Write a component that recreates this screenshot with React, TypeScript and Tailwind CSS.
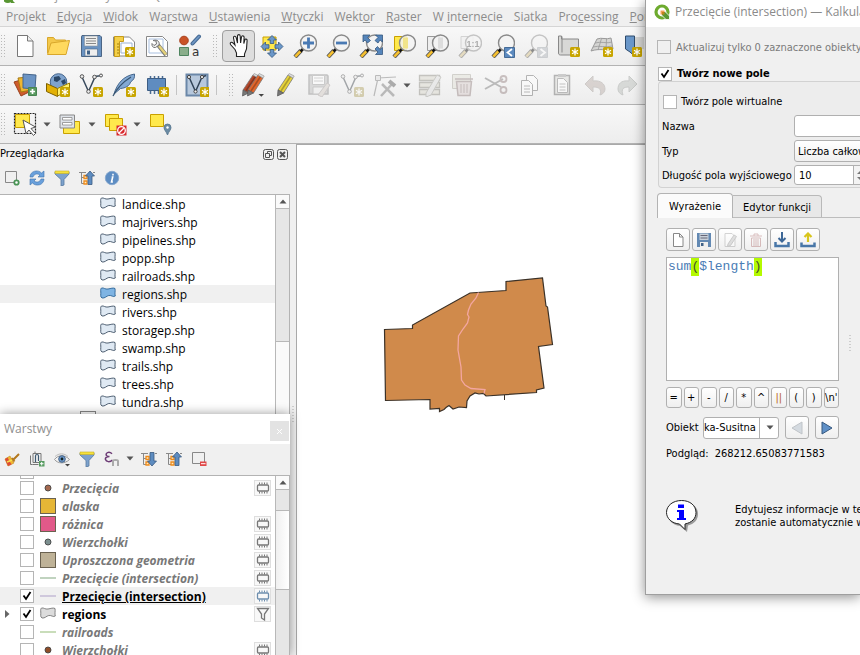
import type { ReactNode } from 'react';

const ui = "font-['Open_Sans','Noto_Sans',sans-serif]";
const dlgFont = "font-['DejaVu_Sans_Condensed','DejaVu_Sans',sans-serif]";

/* ---------- shared drawing parts ---------- */

function Svg({ size = 24, children, dim = false }: { size?: number; children: ReactNode; dim?: boolean }) {
  return (
    <svg width={size} height={size} viewBox={`0 0 ${size} ${size}`} fill="none" className={dim ? 'shrink-0 opacity-45 grayscale-[60%]' : 'shrink-0'} aria-hidden="true">
      {children}
    </svg>
  );
}

function Badge({ x = 15, y = 14 }: { x?: number; y?: number }) {
  return (
    <g transform={`translate(${x} ${y})`}>
      <rect x="0" y="0" width="10" height="10" rx="1.5" fill="#c8a500" />
      <path d="M5 1.5v7M2 3.2l6 3.6M8 3.2L2 6.8" stroke="#fff" strokeWidth="1.3" />
    </g>
  );
}

function Lens({ children }: { children?: ReactNode }) {
  return (
    <g>
      <path d="M2 23l6-6.500" stroke="#555" strokeWidth="4.200" />
      <path d="M2.300 22.700l5.400-5.800" stroke="#f7c12f" strokeWidth="2.500" />
      <path d="M7.500 17.500l3-3" stroke="#111" strokeWidth="2.800" />
      <circle cx="15.500" cy="9" r="8" fill="#f3f3f3" fillOpacity=".85" stroke="#8a8a8a" strokeWidth="1.400" />
      {children}
    </g>
  );
}

function Pencil({ x = 0, color = '#e8d33a' }: { x?: number; color?: string }) {
  return (
    <g transform={`translate(${x} 0)`}>
      <path d="M4 17L14 2l5 3L9.500 20z" fill={color} stroke="#777" strokeWidth=".8" />
      <path d="M7 18L16.500 3.500" stroke="#000" strokeOpacity=".25" strokeWidth="1.600" />
      <path d="M14 2l1.200-1.500 5 2.500-1.200 2z" fill="#ddd" stroke="#999" strokeWidth=".7" />
      <path d="M4 17l5.500 3L3.500 23z" fill="#777" stroke="#555" strokeWidth=".7" />
    </g>
  );
}

const page = 'M4.500 1.500h10l5.500 5.500v15.500h-15.500z';

/* ---------- toolbar icons ---------- */

const NewDoc = () => (
  <Svg><path d={page} fill="#fff" stroke="#777" /><path d="M14.500 1.500V7H20" stroke="#777" fill="#eee" /></Svg>
);
const Folder = () => (
  <Svg><path d="M1.500 19V3.500h6l2 2.500h10v4" fill="#f3c84b" stroke="#d8a72c" /><path d="M1.500 20.500L5 9l18.500-2.500L20 20.500z" fill="#ffd95e" stroke="#d8a72c" /></Svg>
);
const Save = () => (
  <Svg>
    <path d="M3 1.500h18l1.500 1.500v19.500h-20V3z" fill="#6a93c2" stroke="#4b6585" />
    <path d="M5.500 2h13v10h-13z" fill="#f0f0ee" stroke="#8b949e" strokeWidth=".6" />
    <path d="M7 4.500h10M7 7h10M7 9.500h10" stroke="#888" />
    <path d="M6 15h12.500v7H6z" fill="#eee" stroke="#4b6585" strokeWidth=".6" /><path d="M8 16.500h3v4H8z" fill="#3f6187" />
  </Svg>
);
const Layout = () => (
  <Svg>
    <path d="M1.500 3h16l5 5v14h-21z" fill="#fff" stroke="#888" />
    <path d="M2.500 2.500h9v5h-4v15h-5z" fill="#f4d048" stroke="#c69b18" />
    <path d="M5 10h2M5 13h2M5 16h2M5 19h2" stroke="#8a6a00" strokeWidth=".8" /><path d="M9 9h11v10H9z" stroke="#9bb2d2" />
    <Badge x={13} y={13} />
  </Svg>
);
const LayoutManager = () => (
  <Svg>
    <path d="M1.500 2.500h16l5 5v15h-21z" fill="#fff" stroke="#888" /><path d="M4 5h14v14H4z" stroke="#a9c0e0" />
    <path d="M13 11l8 10" stroke="#777" strokeWidth="4" /><path d="M14 12l7 8.500" stroke="#e5d27a" strokeWidth="2.400" />
    <path d="M8 6.500l3 .5.500 3-2.500 1.500L7 9.500c-.5 2.500 1 4.500 3.500 4l3.500-2.500c1-3-1.500-6-6-4.500z" fill="#eee" stroke="#777" />
  </Svg>
);
const StyleManager = () => (
  <Svg>
    <circle cx="6" cy="6.500" r="4.300" fill="#c95327" stroke="#a8401b" /><path d="M14.500 9.500L21 2.500" stroke="#476b94" strokeWidth="4" strokeLinecap="round" /><path d="M14.500 9.500L21 2.500" stroke="#6f97c4" strokeWidth="1.800" strokeLinecap="round" />
    <path d="M1.500 13.500h9v8h-9z" fill="#8aae8b" stroke="#4f8560" />
    <text x="14" y="22" fontSize="12" fill="#333" fontFamily="DejaVu Sans, sans-serif">a</text>
  </Svg>
);
const Hand = () => (
  <Svg>
    <path d="M8 15.500L3.500 10.500C2.500 8.500 4.500 7.500 6 9l2 2.200L6.500 4c-.3-1.900 2-2.400 2.600-.6L10.500 9V2c0-1.900 2.600-1.900 2.700 0l.4 7L14.500 3c.3-1.800 2.700-1.400 2.600.3L16.800 9.500l1-3.500c.5-1.600 2.500-1 2.300.6L19.500 15l-2 5v2.500H9.500V19z" fill="#fff" stroke="#222" strokeWidth="1.100" />
  </Svg>
);
const PanSelection = () => (
  <Svg>
    <path d="M3 3h13v13H3z" fill="#ffe94c" stroke="#c9a000" />
    {[0, 90, 180, 270].map((a) => (
      <path key={a} transform={`rotate(${a} 12 12.500)`} d="M12 1.500l4.500 4.500h-2.700v3.500h-3.600V6H7.500z" fill="#6a97c9" stroke="#36587f" strokeWidth=".8" />
    ))}
  </Svg>
);
const ZoomIn = () => <Svg><Lens><path d="M15.500 3.500v11M10 9h11" stroke="#4a7ab4" strokeWidth="2.800" /></Lens></Svg>;
const ZoomOut = () => <Svg><Lens><path d="M10 9h11" stroke="#4a7ab4" strokeWidth="2.800" /></Lens></Svg>;
const ZoomFull = () => (
  <Svg>
    <Lens />
    <path d="M4 1h7L8.500 3.500l3 3-3 2.500-2.500-3L4 8zM23.500 1h-7L19 3.500l-3 3L19 9l2-3 2.500 2zM23.500 20.500h-7L19 18l-3-3 2.500-2.500L21 15.500l2.500-2z" fill="#5585bb" stroke="#36587f" strokeWidth=".8" />
  </Svg>
);
const ZoomSel = () => (
  <Svg><path d="M2.500 2.500h12v14h-12z" fill="#ffe94c" stroke="#c9a000" /><Lens><path d="M11 3.500h5v11h-5z" fill="#f1e48a" /></Lens></Svg>
);
const ZoomLayer = () => (
  <Svg><path d="M2.500 2.500h12v14h-12z" fill="#eee" stroke="#999" /><Lens><path d="M15.500 3.500v11" stroke="#ddd" strokeWidth="5" /></Lens></Svg>
);
const ZoomNative = () => (
  <Svg dim>
    <path d="M3 2.500h12v12H3z" fill="#eee" stroke="#aaa" />
    <Lens /><text x="8.500" y="12.500" fontSize="9" fontWeight="bold" fill="#555" fontFamily="Liberation Sans, sans-serif">1:1</text>
  </Svg>
);
const ZoomLast = () => (
  <Svg><Lens /><path d="M13.500 13.500h10v10h-10z" fill="#5c8abf" stroke="#456b96" /><path d="M21 15l-4.500 3.500L21 22" stroke="#fff" strokeWidth="1.800" /></Svg>
);
const ZoomNext = () => (
  <Svg dim><Lens /><path d="M13.500 13.500h10v10h-10z" fill="#a8b5c3" stroke="#9aa6b4" /><path d="M16.500 15l4.500 3.500-4.500 3.500" stroke="#fff" strokeWidth="1.800" /></Svg>
);
const NewMap = () => (
  <Svg><path d="M1.500 2h3v3h17v16h-18c-1 0-2-.5-2-2z" fill="#d8d8d6" stroke="#888" /><path d="M5 2.500v16" stroke="#888" /><Badge x={13} y={13} /></Svg>
);
const New3D = () => (
  <Svg>
    <path d="M7 5c5-2 9 1 14-1l2 11c-8 2-13-1-22 2z" fill="#d5d5d3" stroke="#999" />
    <path d="M5 9c6-2 12 1 17-1M3 13c6-2 13 1 19-1M11.500 4.500L8 16M16.500 5l-.5 11" stroke="#999" strokeWidth=".8" /><Badge x={13} y={13} />
  </Svg>
);
const Bookmark = () => (
  <Svg><path d="M2.500 2h9v20l-4.500-4-4.500-3z" fill="#6a97c9" stroke="#2f4c6d" /><path d="M12 3h9v12h-9z" fill="#d8d8d6" /><Badge x={9} y={13} /></Svg>
);
const DataSource = () => (
  <Svg>
    <path d="M1 9l10-3 5 13-8 4z" fill="#cf5c2c" stroke="#99401c" /><path d="M5 5l11-1 2 13-10 2z" fill="#efb62f" stroke="#a77a12" />
    <path d="M10 1l13 1-1 14-12-1z" fill="#6c94c4" stroke="#44648a" />
    <path d="M15.500 14.500h8v8h-8z" fill="#5a9a61" stroke="#478450" /><path d="M19.500 16v5M17 18.500h5" stroke="#fff" strokeWidth="1.700" />
  </Svg>
);
const Geopackage = () => (
  <Svg>
    <circle cx="12.500" cy="9" r="8.300" fill="#7fa3cd" stroke="#45658c" /><path d="M8 4l5-1 2 3-4 3-3-1zM15 8l4-2 1 4-3 2z" fill="#2b4767" />
    <path d="M.5 10.500l11 5v8l-11-5z" fill="#e3b004" stroke="#7d6000" /><path d="M11.500 15.500l12-5.500v7l-12 6z" fill="#fff06a" stroke="#9c7b00" /><Badge x={14} y={14} />
  </Svg>
);
const Shape = () => (
  <>
    <path d="M3 4l6.500 14.500L16 4c2-2 5 0 7-2" stroke="#37495c" strokeWidth="1.500" />
    <circle cx="3" cy="3.500" r="1.800" fill="#eee" stroke="#555" /><circle cx="15.500" cy="4" r="1.800" fill="#eee" stroke="#555" /><circle cx="9.500" cy="18.500" r="1.800" fill="#eee" stroke="#555" /><circle cx="22" cy="2.500" r="1.500" fill="#eee" stroke="#555" />
  </>
);
const NewShape = () => <Svg><Shape /><Badge x={14} y={14} /></Svg>;
const Feather = () => (
  <Svg><path d="M2 21C5 11 11 3 22.500 1c.5 4-1 6-4 8-1 4-5 6-10 6.500z" fill="#83a9d3" stroke="#46678d" /><path d="M1 23C5 15 11 9 19 4" stroke="#35536f" strokeWidth="1.200" /><Badge x={14} y={14} /></Svg>
);
const Scratch = () => (
  <Svg>
    <path d="M5.500 3v18M9.500 3v18M13.500 3v18M17.500 3v18" stroke="#4a6b92" strokeWidth="1.500" /><path d="M2.500 5.500h18v12h-18z" fill="#5f8cc0" stroke="#3c5d84" /><Badge x={14} y={14} />
  </Svg>
);
const Virtual = () => (
  <Svg><path d="M1.500 1.500h21v21h-21z" fill="#b7c8dc" stroke="#6b87a8" strokeWidth="2" /><path d="M4 4l6.500 14.500L17 4l4-1.500" stroke="#2f4257" strokeWidth="1.500" /><circle cx="4" cy="4" r="1.600" fill="#eee" stroke="#444" /><circle cx="17" cy="4" r="1.600" fill="#eee" stroke="#444" /><circle cx="10.500" cy="18.500" r="1.600" fill="#eee" stroke="#444" /><Badge x={15} y={14} /></Svg>
);
const Pencils = () => <Svg><Pencil x={-2} color="#b5472a" /><Pencil x={3} color="#e2662c" /><path d="M17.500 21h5.500l-2.700 2.700z" fill="#444" /></Svg>;
const Edit = () => <Svg><Pencil x={0} color="#e8d33a" /></Svg>;
const SaveEdits = () => (
  <Svg dim><path d="M2 2h18l1 1v18H2z" fill="#bbb" stroke="#888" strokeWidth="1.500" /><path d="M5.500 2.500h12v9h-12z" fill="#fff" stroke="#999" /><path d="M7 5h9M7 8h9" stroke="#aaa" /><path d="M6 14h11v7H6z" fill="#eee" stroke="#999" /><path d="M11 22l9-12 3 2-8 12z" fill="#ddc9b9" stroke="#a99" /></Svg>
);
const AddFeature = () => <Svg dim><Shape /><Badge x={14} y={14} /></Svg>;
const Vertex = () => (
  <Svg dim><path d="M1 23L5 5l18-1" stroke="#777" strokeWidth="1.200" /><path d="M2.500 2.500h5v5h-5z" fill="#ddd" stroke="#777" /><path d="M9 11l12 12M20 10L8 23" stroke="#777" strokeWidth="2.500" /><path d="M16 8l6 5" stroke="#555" strokeWidth="4" /></Svg>
);
const Attributes = () => (
  <Svg dim><path d="M1.500 2.500h20v5h-20zM1.500 9.500h20v5h-20zM1.500 16.500h20v5h-20z" fill="#ddd6b8" stroke="#8d8872" strokeWidth="1.300" /><path d="M8 20L19 2l4 2-10 18-5 2z" fill="#ddd" stroke="#998" /></Svg>
);
const Delete = () => (
  <Svg dim><path d="M1.500 1.500h18v14h-18z" fill="#e3dfc8" stroke="#aaa58c" /><path d="M4 6h18M5.500 8.500h15l-1.500 14H7z" fill="#e4c6c4" stroke="#a47775" strokeWidth="1.500" /><path d="M10 11v9M13 11v9M16 11v9" stroke="#a47775" /></Svg>
);
const Cut = () => (
  <Svg dim><path d="M1 5l16 9M1 16L19 6" stroke="#777" strokeWidth="2" /><circle cx="19.500" cy="6" r="3" stroke="#a77" strokeWidth="1.800" /><circle cx="19.500" cy="17" r="3" stroke="#a77" strokeWidth="1.800" /></Svg>
);
const Copy = () => (
  <Svg dim><path d="M9.500 2.500h7l4 4v11h-11z" fill="#fff" stroke="#666" /><path d="M4.500 7.500h7l4 4v11h-11z" fill="#fff" stroke="#666" /><path d="M7 13h6M7 16h6M7 19h6" stroke="#777" /></Svg>
);
const Paste = () => (
  <Svg dim><path d="M4.500 2.500h15v19h-15z" fill="#d9d9cf" stroke="#666" strokeWidth="1.500" /><path d="M7.500 5.500h6l4 4v10h-10z" fill="#fff" stroke="#777" /><path d="M8 1h8v3H8z" fill="#999" /><path d="M9.500 11h6M9.500 14h6M9.500 17h6" stroke="#888" /></Svg>
);
const Undo = () => <Svg dim><path d="M2 11l8-8v5c8-1 12 3 12 8 0 3-2 5-5 6 2-6-1-8-7-8v5z" fill="#c9a99a" stroke="#a99a92" /></Svg>;
const Redo = () => <Svg dim><path d="M21 11l-8-8v5C5 7 2 11 2 16c0 3 2 5 5 6-2-6 0-8 6-8v5z" fill="#b3bdb3" stroke="#949c94" /></Svg>;
const Select = () => (
  <Svg>
    <path d="M1.500 1.500h21v20h-21z" stroke="#222" strokeWidth="1.200" strokeDasharray="2 1" /><path d="M2.500 2.500h14v13h-14z" fill="#ffe94c" stroke="#c9a000" />
    <path d="M10 8l3 13.500 3-3.500 4.500 5.500 2-2-4.500-5 4.500-1.500z" fill="#fff" stroke="#555" />
  </Svg>
);
const SelectValue = () => (
  <Svg><path d="M5.500 9.500h16v12h-16z" fill="#ffe94c" stroke="#c9a000" /><path d="M2 3h14.500v13H2z" fill="#dfe3e9" stroke="#888" /><path d="M4.500 5.500h9.500v2.500H4.500zM4.500 10.500h9.500V13H4.500z" fill="#fff" stroke="#8a8a8a" strokeWidth=".8" /></Svg>
);
const Deselect = () => (
  <Svg>
    <path d="M2.500 2.500h13v12h-13z" fill="#ffe94c" stroke="#c9a000" /><path d="M6.500 6.500h13v12h-13z" fill="#ffe94c" stroke="#c9a000" />
    <path d="M13.500 13.500h10v10h-10z" fill="#d9292e" /><circle cx="18.500" cy="18.500" r="3.800" stroke="#fff" strokeWidth="1.300" /><path d="M16 21l5-5" stroke="#fff" strokeWidth="1.300" />
  </Svg>
);
const SelectLoc = () => (
  <Svg><path d="M2.500 2.500h13v12h-13z" fill="#ffe94c" stroke="#c9a000" /><path d="M19.500 23c-1.500-4-3.500-5-3.500-7.500a3.500 3.500 0 0 1 7 0c0 2.500-2 3.500-3.500 7.500z" fill="#6b8ba4" stroke="#54748c" strokeWidth=".8" /><circle cx="19.500" cy="15.500" r="1.200" fill="#fff" /></Svg>
);

/* ---------- small panel icons ---------- */

const Tree = ({ down = false }: { down?: boolean }) => (
  <Svg size={16}>
    <path d="M0 2.500h7M2.500 2.500v11h4M2.500 7.500h3M14 2.500h2" stroke="#888" /><path d="M5 5.500h3v3H5zM5 11h3v3H5z" fill="#fbe9c6" stroke="#f08c1a" strokeWidth="1.300" />
    <path transform={down ? 'rotate(180 11 8)' : undefined} d="M11 1l4.500 5h-2.500v8.500H9V6H6.500z" fill="#5e8cc0" stroke="#3a5b82" strokeWidth=".8" />
  </Svg>
);
const Funnel = () => (
  <Svg size={16}><path d="M1 2h14v2L10 9.500V15l-3 1V9.500L1 4z" fill="#7da2cd" stroke="#55799f" strokeWidth=".8" /><path d="M1 1h14v2.500H1z" fill="#f6e13b" stroke="#c7b021" strokeWidth=".6" /></Svg>
);
const AddSel = () => <Svg size={16}><path d="M1.500 1.500h11v11h-11z" stroke="#888" /><circle cx="12.500" cy="12.500" r="2.200" fill="#fff" stroke="#4a9456" strokeWidth="1.800" /></Svg>;
const Refresh = () => (
  <Svg size={16}><path d="M1 7C1 1 9-1 12.500 3L15 1v6H9l2-2C8 3 5 4 4 7zM15 9c0 6-8 8-11.500 4L1 15V9h6l-2 2c3 2 6 1 7-2z" fill="#69a0dc" stroke="#3f73ad" strokeWidth=".6" /></Svg>
);
const Info = () => (
  <Svg size={16}><circle cx="8" cy="8" r="6.700" fill="#5d8dc3" stroke="#88a9cf" /><path d="M9 3.800v1.800M7.700 7h1L7.500 12h1.400" stroke="#fff" strokeWidth="1.600" /></Svg>
);
const Brush = () => (
  <Svg size={16}><path d="M1 8l5-3 4 7-6 3z" fill="#f2b632" stroke="#c08a1d" strokeWidth=".6" /><path d="M1 8l2.500-1.500 4 7L4 15z" fill="#dd4b36" /><path d="M3 11l5-2" stroke="#f7e14f" strokeWidth="1.500" /><path d="M8 7l2.500 3.500M9.500 8.500L15 3" stroke="#b3781f" strokeWidth="2" /></Svg>
);
const AddGroup = () => (
  <Svg size={16}><path d="M3.500 13.500h-2v-9M4 11.500V2.500h8v9zM6 2V.5M3.500 13.500h6" stroke="#777" /><path d="M6.500 11V5c0-2 3-2 3 0v5" stroke="#3d5a72" strokeWidth="1.200" /><path d="M10 10h5.500v5.500H10z" fill="#579b61" /><path d="M12.700 11v3.500M11 12.700h3.500" stroke="#fff" /></Svg>
);
const Eye = () => (
  <Svg size={16}><path d="M.5 8.500C4 3.500 11 3.500 15.500 8.500 11 13 4 13 .5 8.500z" fill="#f3f3f3" stroke="#999" /><path d="M1 5.500c4-3.500 9-3.500 13 0" stroke="#bbb" /><circle cx="8" cy="8" r="3.300" fill="#6f9bce" stroke="#44648a" /><circle cx="8" cy="8" r="1.400" fill="#122" /><path d="M11 13h5l-2.500 2.500z" fill="#444" /></Svg>
);
const Expr = () => (
  <Svg size={16}><path d="M8 2.800C5-.2 1 2 2.500 4.500c.5 1 2 1 3 1-3 0-4.500 1.500-4 3 .7 2.500 4.500 3 7 .5" stroke="#6c3b75" strokeWidth="1.500" /><path d="M9 15V10c0-1.500 5-1.500 5 0v5" stroke="#aaa" strokeWidth="2" /></Svg>
);
const Remove = () => <Svg size={16}><path d="M1.500 1.500h12v11h-12z" stroke="#888" /><path d="M9 10.500h6.500v4.500H9z" fill="#e04848" /><path d="M10 12.700h4.500" stroke="#fff" /></Svg>;

const Polygon = ({ fill = '#dfe9f3', stroke = '#3d4f63' }: { fill?: string; stroke?: string }) => (
  <svg width="16" height="12" viewBox="0 0 16 12" aria-hidden="true" className="mb-[2px] shrink-0">
    <path d="M1.500 1C4 .5 5 2.500 8 2S13 .5 15 1.500c.5 2.500-.5 5 .3 7.500-2 1.500-4-1-6.500-.5S5 11.500 2 11C0 10 1 7 .8 5S.5 2 1.500 1z" fill={fill} stroke={stroke} strokeWidth=".9" />
  </svg>
);

/* ---------- widgets ---------- */

function Tool({ name, children, active = false }: { name: string; children: ReactNode; active?: boolean }) {
  return (
    <button
      type="button"
      aria-label={name}
      className={`flex h-8 w-[33px] shrink-0 items-center justify-center rounded-sm ${active ? 'border border-[#9e9e9e] bg-[#dedede]' : ''}`}
    >
      {children}
    </button>
  );
}
const Arrow = () => (
  <svg width="8" height="5" viewBox="0 0 8 5" aria-hidden="true"><path d="M.5 .5h7L4 4.500z" fill="#555" /></svg>
);
function Drop({ name }: { name: string }) {
  return <button type="button" aria-label={name} className="flex h-8 w-3 shrink-0 items-center justify-center"><Arrow /></button>;
}
const Dots = () => (
  <svg width="6" height="22" viewBox="0 0 6 22" className="shrink-0" aria-hidden="true">
    <path d="M1.500 0v22M4.500 0v22" stroke="#b9b9b9" strokeDasharray="1 2" />
  </svg>
);
const Separator = () => <div className="mx-[3px] h-5 w-px shrink-0 bg-[#c4c4c4]" />;
function ToolRow({ label, children }: { label: string; children: ReactNode }) {
  return (
    <div role="toolbar" aria-label={label} className="flex h-[39px] shrink-0 items-center border-b border-[#b3b3b3] bg-linear-to-b from-[#f8f8f8] to-[#ededed]">
      <div className="w-2 shrink-0"><Dots /></div>
      {children}
    </div>
  );
}

function Check({ id, checked = false, label, disabled = false }: { id: string; checked?: boolean; label?: string; disabled?: boolean }) {
  return (
    <span className="grid shrink-0 place-items-center">
      <input
        id={id}
        type="checkbox"
        aria-label={label}
        defaultChecked={checked}
        disabled={disabled}
        className={`peer col-start-1 row-start-1 size-[14px] appearance-none border border-[#b5b5b5] ${disabled ? 'bg-[#f0f0f0]' : 'bg-white'}`}
      />
      <svg width="10" height="10" viewBox="0 0 10 10" className="pointer-events-none invisible col-start-1 row-start-1 peer-checked:visible" aria-hidden="true">
        <path d="M1.500 4.500L4 8l4.500-7" fill="none" stroke="#000" strokeWidth="1.800" />
      </svg>
    </span>
  );
}

function ScrollUp() {
  return (
    <button type="button" aria-label="Przewiń w górę" className="flex h-[14px] shrink-0 items-center justify-center border-b border-[#b8b8b8] bg-[#fafafa]">
      <svg width="8" height="5" viewBox="0 0 8 5" aria-hidden="true"><path d="M.5 4.500h7L4 .5z" fill="#555" /></svg>
    </button>
  );
}

/* ---------- main window ---------- */

const menus: [string, string, string][] = [
  ['Pro', 'j', 'ekt'], ['', 'E', 'dycja'], ['', 'W', 'idok'], ['Wa', 'r', 'stwa'], ['', 'U', 'stawienia'], ['', 'W', 'tyczki'],
  ['Wekt', 'o', 'r'], ['', 'R', 'aster'], ['W ', 'i', 'nternecie'], ['Siatka', '', ''], ['Pro', 'c', 'essing'], ['', 'P', 'omoc'],
];

const files = ['landice', 'majrivers', 'pipelines', 'popp', 'railroads', 'regions', 'rivers', 'storagep', 'swamp', 'trails', 'trees', 'tundra'];

function Browser() {
  return (
    <section className="flex w-[290px] shrink-0 flex-col">
      <header className={`flex h-5 items-center text-[11px] ${dlgFont}`}>
        <h2 className="flex-1">Przeglądarka</h2>
        <div className="flex gap-[3px] pr-[2px]">
          <button type="button" aria-label="Odepnij">
            <svg width="11" height="11" viewBox="0 0 11 11" fill="none" stroke="#555" aria-hidden="true"><rect x=".5" y=".5" width="10" height="10" rx="2" /><path d="M4.500 4V2.500h4v4H7M2.500 4.500h4v4h-4z" /></svg>
          </button>
          <button type="button" aria-label="Zamknij">
            <svg width="11" height="11" viewBox="0 0 11 11" fill="none" stroke="#555" aria-hidden="true"><rect x=".5" y=".5" width="10" height="10" rx="2" /><path d="M3 3l5 5M8 3L3 8" strokeWidth="2" /></svg>
          </button>
        </div>
      </header>
      <div className="flex h-[30px] items-center gap-[9px] pb-[2px] pl-1">
        <button type="button" aria-label="Dodaj"><AddSel /></button>
        <button type="button" aria-label="Odśwież"><Refresh /></button>
        <button type="button" aria-label="Filtruj"><Funnel /></button>
        <button type="button" aria-label="Zwiń"><Tree /></button>
        <button type="button" aria-label="Właściwości"><Info /></button>
      </div>
      <div className="flex min-h-0 flex-1 border-t border-r border-[#b3b3b3] bg-white">
        <ul className="min-w-0 flex-1 overflow-hidden">
          {files.map((f) => (
            <li key={f} className={`flex h-[18px] items-center gap-[6px] pl-[100px] text-[12px] leading-4 ${ui} ${f === 'regions' ? 'bg-[#f0f0f0]' : ''}`}>
              <Polygon fill={f === 'regions' ? '#7fb4e3' : undefined} stroke={f === 'regions' ? '#2d6496' : undefined} />
              <span className="pt-[2px]">{f}.shp</span>
            </li>
          ))}
          <li className="ml-20 size-4 border border-[#888]" />
        </ul>
        <div className="flex w-[14px] flex-col border-l border-[#b8b8b8] bg-[#fafafa]">
          <ScrollUp />
          <div className="h-[133px] border-b border-[#b8b8b8] bg-[#e6e6e6]" />
        </div>
      </div>
    </section>
  );
}

type Layer = { name: string; kind: 'dot' | 'box' | 'line' | 'poly'; color: string; end?: 'mem' | 'filter'; on?: boolean; current?: boolean };
const layers: Layer[] = [
  { name: 'Przecięcia', kind: 'dot', color: '#a5694f', end: 'mem' },
  { name: 'alaska', kind: 'box', color: '#e5b636' },
  { name: 'różnica', kind: 'box', color: '#e15989', end: 'mem' },
  { name: 'Wierzchołki', kind: 'dot', color: '#7c8f8f', end: 'mem' },
  { name: 'Uproszczona geometria', kind: 'box', color: '#beb297', end: 'mem' },
  { name: 'Przecięcie (intersection)', kind: 'line', color: '#c0d3bf', end: 'mem' },
  { name: 'Przecięcie (intersection)', kind: 'line', color: '#cfc8dc', end: 'mem', on: true, current: true },
  { name: 'regions', kind: 'poly', color: '#ddd', end: 'filter', on: true },
  { name: 'railroads', kind: 'line', color: '#c9ddba' },
  { name: 'Wierzchołki', kind: 'dot', color: '#8f4d28', end: 'mem' },
];

function Swatch({ kind, color }: { kind: Layer['kind']; color: string }) {
  if (kind === 'poly') return <Polygon fill="#dcdcdc" stroke="#777" />;
  return (
    <svg width="16" height="16" viewBox="0 0 16 16" className="shrink-0" aria-hidden="true">
      {kind === 'dot' && <circle cx="8" cy="8" r="3" fill={color} stroke="#444" strokeWidth=".9" />}
      {kind === 'box' && <rect x=".5" y=".5" width="15" height="15" fill={color} stroke="#6a6250" />}
      {kind === 'line' && <path d="M0 8h16" stroke={color} strokeWidth="2" />}
    </svg>
  );
}

function EndIcon({ type, blue }: { type: 'mem' | 'filter'; blue?: boolean }) {
  return (
    <button type="button" aria-label={type === 'mem' ? 'Warstwa tymczasowa' : 'Filtr'} className="flex h-4 w-[17px] shrink-0 items-center justify-center border border-[#dedede] bg-[#f8f8f8]">
      <svg width="14" height="14" viewBox="0 0 14 14" fill="none" stroke={blue ? '#6d8eae' : '#777'} className="shrink-0" aria-hidden="true">
        {type === 'mem'
          ? <><rect x="1.500" y="4" width="11" height="6" rx="1" strokeWidth="1.300" /><path d="M3.500 1.500v2M6 1.500v2M8.500 1.500v2M11 1.500v2M3.500 10.500v2M6 10.500v2M8.500 10.500v2M11 10.500v2" /></>
          : <path d="M1.500 1.500h11L8.500 7v6l-3-2V7z" strokeWidth="1.300" />}
      </svg>
    </button>
  );
}

function LayersWindow() {
  return (
    <section className="absolute top-[414px] bottom-0 left-0 flex w-[290px] flex-col bg-[#f0f0f0] shadow-[0_0_10px_rgba(0,0,0,0.4)]">
      <header className="flex h-[30px] shrink-0 items-center bg-white pl-1">
        <h2 className={`flex-1 text-[12px] text-[#8f8f8f] ${ui}`}>Warstwy</h2>
        <button type="button" aria-label="Zamknij" className="mr-px mt-1 flex h-5 w-[19px] items-center justify-center bg-[#e3e3e3]">
          <svg width="5" height="5" viewBox="0 0 5 5" stroke="#fff" aria-hidden="true"><path d="M0 0l5 5M5 0L0 5" /></svg>
        </button>
      </header>
      <div className="flex h-[31px] shrink-0 items-center gap-[9px] pb-[2px] pl-1">
        <button type="button" aria-label="Styl"><Brush /></button>
        <button type="button" aria-label="Dodaj grupę"><AddGroup /></button>
        <button type="button" aria-label="Widoczność"><Eye /></button>
        <button type="button" aria-label="Filtruj"><Funnel /></button>
        <div className="-mr-1 flex items-center gap-1"><button type="button" aria-label="Filtr wyrażenia"><Expr /></button><Drop name="Więcej" /></div>
        <button type="button" aria-label="Rozwiń"><Tree down /></button>
        <button type="button" aria-label="Zwiń"><Tree /></button>
        <button type="button" aria-label="Usuń"><Remove /></button>
      </div>
      <div className="flex min-h-0 flex-1 border-t border-r border-[#b3b3b3] bg-white">
        <ul className={`min-w-0 flex-1 overflow-hidden text-[12px] leading-4 font-bold ${ui}`}>
          <li className="flex h-[3px] items-end overflow-hidden pl-5"><span className="h-[3px] w-[14px] border-x border-b border-[#b5b5b5]" /></li>
          {layers.map((l, i) => (
            <li key={i} className={`flex h-[18px] items-center pr-1 ${l.current ? 'bg-[#f0f0f0]' : ''}`}>
              <span className="flex w-5 shrink-0 pl-[5px]">
                {l.kind === 'poly' && <svg width="5" height="8" viewBox="0 0 5 8" aria-hidden="true"><path d="M0 0l4.500 4L0 8z" fill="#666" /></svg>}
              </span>
              <Check id={`layer-${i}`} checked={l.on} />
              <label htmlFor={`layer-${i}`} className="flex min-w-0 flex-1 items-center gap-[6px] pl-[6px]">
                <Swatch kind={l.kind} color={l.color} />
                <span className={`pt-[2px] ${l.current ? 'underline' : l.on ? '' : 'text-[#787878] italic'}`}>{l.name}</span>
              </label>
              {l.end && <EndIcon type={l.end} blue={l.current} />}
            </li>
          ))}
        </ul>
        <div className="flex w-[14px] flex-col border-l border-[#b8b8b8] bg-[#e6e6e6]">
          <ScrollUp />
          <div className="h-5 shrink-0 bg-[#e6e6e6]" />
          <div className="h-20 shrink-0 border-y border-[#b8b8b8] bg-linear-to-r from-[#f0f0f0] to-white" />
        </div>
      </div>
    </section>
  );
}

function MapCanvas() {
  return (
    <main className="min-w-0 flex-1 border-t border-l border-[#a9a9a9] bg-white pt-[115px] pl-[73px]">
      <svg width="190" height="160" viewBox="0 0 190 160" fill="none" role="img" aria-label="Mapa">
        <path
          d="M14.500 69.500L42.500 68.500V65L100 33 136 30.500V21.500L172.500 18 176 46l1.500 1L182.500 84.500 168.500 86.500 174 128l-7.500 2v2.500L116 136l-2.500-2.500-4.500.5-4-1-5 3-3 5-.5 6.500-7.500-.5-6 2-4-3.500-3 2-2 2-4.500 2v-3L60 149V139.500L15.500 140.500z"
          fill="#d08a4b" stroke="#3b3127" strokeWidth="1.200"
        />
        <path d="M134.500 135v5" stroke="#3b3127" />
        <path d="M108.500 32.500L106 38l-5 6-2.500 6-1 4.500 1.500 2.500-1.500 6-4.500 6-4.500 7-.5 14 3 17 .5 13 3.500 5 6 3.500 14 1-1 4" stroke="#f3a6a0" strokeWidth="1.300" />
      </svg>
    </main>
  );
}

/* ---------- field calculator ---------- */

const boxBtn = 'flex items-center justify-center rounded-[3px] border border-[#b0b0b0] bg-linear-to-b from-white to-[#efefef]';

const codeTools: [string, ReactNode, boolean][] = [
  ['Nowy', <path d="M3.500 1.500h6l3.500 3.500v9.500H3.500zM9.500 1.500V5H13" fill="#fff" stroke="#888" />, false],
  ['Zapisz', <g><path d="M1 1h14v14H1z" fill="#6389b3" /><path d="M3.500 1.500h9V8h-9z" fill="#c9d1da" /><path d="M4.500 3.500h7M4.500 6h7" stroke="#667" /><path d="M4 10h8v5H4z" fill="#eee" /><path d="M5 11h2.500v3H5z" fill="#3f6187" /></g>, false],
  ['Edytuj', <g><path d="M3 1.500h7l3 3v10H3z" fill="#fff" stroke="#999" /><path d="M6 12l6-9 2.500 1.500-6 9-3 1z" fill="#bbb" stroke="#888" /></g>, true],
  ['Usuń', <path d="M2 4h12M6 4V2h4v2M3.500 6h9v8.500h-9zM6 7v7M8 7v7M10 7v7" stroke="#a66" />, true],
  ['Importuj', <g><path d="M8 0v9M4.500 6L8 9.500 11.500 6" stroke="#3c6797" strokeWidth="2" /><path d="M1.500 10v4h13v-4" stroke="#4977a8" strokeWidth="2.500" /></g>, false],
  ['Eksportuj', <g><path d="M8 10V2M4.500 5L8 1.500 11.500 5" stroke="#d8c51c" strokeWidth="2.200" /><path d="M1.500 10.500V14h13v-3.500" stroke="#4977a8" strokeWidth="2.500" /></g>, false],
];
const operators = ['=', '+', '-', '/', '*', '^', '||', '(', ')', "\\n'"];

function Calculator() {
  return (
    <section className={`absolute top-0 right-0 left-3/4 h-[595px] overflow-hidden border-b border-l border-[#9f9f9f] bg-[#f0f0f0] text-[11px] leading-[13px] whitespace-nowrap ${dlgFont}`}>
      <header className="flex h-[27px] items-center gap-[5px] bg-white pb-1 pl-2">
        <svg width="16" height="16" viewBox="0 0 16 16" fill="none" className="shrink-0" aria-hidden="true">
          <circle cx="8" cy="8" r="6" stroke="#6eab2f" strokeWidth="3.200" /><path d="M7.500 7.500h3.500l4.500 4.500v3.500H12L7.500 11z" fill="#589632" stroke="#fff" strokeWidth=".8" /><path d="M6.500 6.500h4v4h-4z" fill="#ee7913" fillOpacity=".7" />
        </svg>
        <h2 className={`text-[12px] text-[#8a8a8a] ${ui}`}>Przecięcie (intersection) — Kalkulator pól</h2>
      </header>
      <div className="flex h-10 items-center gap-[5px] pl-[11px] text-[#7b7b7b]">
        <Check id="upd" disabled /><label htmlFor="upd">Aktualizuj tylko 0 zaznaczone obiekty</label>
      </div>
      <div className="flex h-[14px] items-start gap-[5px] pl-3 font-bold">
        <Check id="new" checked /><label htmlFor="new">Twórz nowe pole</label>
      </div>
      <div className="ml-3 flex h-[107px] flex-col rounded-l-sm border border-r-0 border-[#d2d2d2] bg-[#ededed] pl-[3px]">
        <div className="flex h-[33px] items-center gap-1 pt-[6px] pl-px"><Check id="virt" /><label htmlFor="virt">Twórz pole wirtualne</label></div>
        <div className="grid grid-cols-[132px_1fr] items-center gap-y-[3px]">
          <label htmlFor="fname">Nazwa</label>
          <input id="fname" className="h-[22px] w-[140px] rounded-[3px] border border-[#b0b0b0] bg-white" />
          <label htmlFor="ftype">Typ</label>
          <select id="ftype" className="h-[22px] w-[140px] appearance-none rounded-[3px] border border-[#b0b0b0] bg-linear-to-b from-white to-[#f0f0f0] pl-[3px]"><option>Liczba całkowita</option></select>
          <label htmlFor="flen">Długość pola wyjściowego</label>
          <div className="flex h-5 rounded-[3px] border border-[#b0b0b0] bg-white">
            <input id="flen" defaultValue="10" className="w-[59px] border-r border-[#b0b0b0] pl-1" />
            <div className="flex flex-col justify-center gap-[3px] bg-[#f3f3f3] px-[3px]">
              <svg width="8" height="4" viewBox="0 0 8 4" aria-hidden="true"><path d="M0 4h8L4 0z" fill="#777" /></svg>
              <svg width="8" height="4" viewBox="0 0 8 4" aria-hidden="true"><path d="M0 0h8L4 4z" fill="#777" /></svg>
            </div>
          </div>
        </div>
      </div>
      <div role="tablist" className="mt-[6px] ml-[11px] flex h-6 items-end border-b border-[#bdbdbd]">
        <button type="button" role="tab" aria-selected="true" className="-mb-px h-[25px] w-[76px] rounded-t-sm border border-b-0 border-[#b3b3b3] bg-[#fbfbfb]">Wyrażenie</button>
        <button type="button" role="tab" aria-selected="false" className="h-[22px] w-[89px] rounded-tr-sm border border-b-0 border-l-0 border-[#b9b9b9] bg-[#e8e8e8] pt-[2px]">Edytor funkcji</button>
      </div>
      <div className="flex items-center pt-[10px] pl-5">
        <div className="flex w-[173px] shrink-0 flex-col">
          <div className="flex gap-[2px]">
            {codeTools.map(([name, icon, off]) => (
              <button key={name} type="button" aria-label={name} disabled={off} className={`h-[23px] w-6 ${boxBtn}`}>
                <svg width="16" height="16" viewBox="0 0 16 16" fill="none" className={off ? 'opacity-40' : ''} aria-hidden="true">{icon}</svg>
              </button>
            ))}
          </div>
          <div
            role="textbox" aria-label="Wyrażenie" contentEditable suppressContentEditableWarning
            className="mt-[6px] h-[124px] border border-[#b0b0b0] bg-white pl-px font-['Liberation_Mono',monospace] text-[13px] leading-[18px] text-[#4a7cb5]"
          >
            sum<span className="inline-block bg-[#b4fa00] text-[#44532b]">(</span>$length<span className="inline-block bg-[#b4fa00] text-[#44532b]">)</span>
          </div>
          <div className="mt-[6px] flex gap-[2px]">
            {operators.map((o) => (
              <button key={o} type="button" className={`h-[21px] min-w-0 flex-1 ${boxBtn} ${o === '||' ? 'text-[#b8601a]' : ''}`}>{o}</button>
            ))}
          </div>
          <div className="mt-2 flex items-center">
            <label htmlFor="feat" className="flex-1">Obiekt</label>
            <div className="grid items-center">
              <select id="feat" className="col-start-1 row-start-1 h-[22px] w-[76px] appearance-none rounded-[3px] border border-[#b0b0b0] bg-white"><option>ka-Susitna</option></select>
              <span className="pointer-events-none col-start-1 row-start-1 flex h-5 w-5 items-center justify-center justify-self-end border-l border-[#b0b0b0]"><Arrow /></span>
            </div>
            <button type="button" aria-label="Poprzedni" disabled className={`ml-[6px] h-[23px] w-6 ${boxBtn}`}>
              <svg width="12" height="14" viewBox="0 0 12 14" aria-hidden="true"><path d="M11 1v12L1 7z" fill="#d4dae0" stroke="#c0c4c8" /></svg>
            </button>
            <button type="button" aria-label="Następny" className={`ml-[6px] h-[23px] w-6 ${boxBtn}`}>
              <svg width="12" height="14" viewBox="0 0 12 14" aria-hidden="true"><path d="M1 1v12l10-6z" fill="#5f90c7" stroke="#36587f" /></svg>
            </button>
          </div>
          <p className="mt-2 flex gap-[6px]"><span>Podgląd:</span><output>268212.65083771583</output></p>
        </div>
        <svg width="2" height="18" viewBox="0 0 2 18" className="ml-[10px]" aria-hidden="true"><path d="M1 0v18" stroke="#aaa" strokeDasharray="1 2" /></svg>
      </div>
      <div className="flex items-start gap-9 pt-10 pl-5">
        <svg width="33" height="33" viewBox="0 0 33 33" className="shrink-0" aria-hidden="true">
          <path d="M17 2C26 2 32 7 32 14c0 6-4 10-10 11.500l-1 6.500-7-6C6 25 2 20 2 14z" fill="#9a9a9a" />
          <path d="M15.500 .5C24 .5 30 5.500 30 12.500c0 6-4 10-11 11.500v5.500L13.500 24C6 23.500 .5 18.500 .5 12.500.5 5.500 7 .5 15.500 .5z" fill="#fff" stroke="#222" />
          <path d="M12 4.500h6v3.500h-6zM11 10h7v8h2v2H11v-2h2v-6h-2z" fill="#00f" />
        </svg>
        <p className="pt-[3px]">Edytujesz informacje w tej warstwie<br />zostanie automatycznie włączony</p>
      </div>
    </section>
  );
}

export default function App() {
  return (
    <div className="relative flex h-screen flex-col overflow-hidden bg-[#f0f0f0] text-black">
      <div className={`flex h-[7px] shrink-0 items-end gap-[14px] overflow-hidden bg-white pl-1 text-[12px] leading-[14px] text-[#999] ${ui}`}>
        <svg width="11" height="11" viewBox="0 0 11 11" className="mb-1" aria-hidden="true"><circle cx="4" cy="5" r="4.500" fill="none" stroke="#589632" strokeWidth="3" /><path d="M5 5l6 6H7z" fill="#589632" /></svg>
        <span className="pb-1">*Projekt bez tytułu — QGIS</span>
      </div>
      <nav className={`flex h-5 shrink-0 items-center gap-[11px] overflow-hidden border-b border-[#d5d5d5] pl-[6px] text-[12px] whitespace-nowrap text-[#8c8c8c] ${ui}`}>
        {menus.map(([a, u, b]) => (
          <button key={a + u + b} type="button" className="shrink-0">{a}<u>{u}</u>{b}</button>
        ))}
      </nav>
      <ToolRow label="Projekt">
        <Tool name="Nowy"><NewDoc /></Tool><Tool name="Otwórz"><Folder /></Tool><Tool name="Zapisz"><Save /></Tool>
        <Tool name="Nowy wydruk"><Layout /></Tool><Tool name="Menedżer wydruków"><LayoutManager /></Tool><Tool name="Style"><StyleManager /></Tool>
        <div className="w-4 shrink-0 pl-[6px]"><Dots /></div>
        <Tool name="Przesuń" active><Hand /></Tool><Tool name="Przesuń do zaznaczenia"><PanSelection /></Tool><Tool name="Powiększ"><ZoomIn /></Tool>
        <Tool name="Pomniejsz"><ZoomOut /></Tool><Tool name="Cały zasięg"><ZoomFull /></Tool><Tool name="Do zaznaczenia"><ZoomSel /></Tool>
        <Tool name="Do warstwy"><ZoomLayer /></Tool><Tool name="1:1"><ZoomNative /></Tool><Tool name="Poprzedni widok"><ZoomLast /></Tool>
        <Tool name="Następny widok"><ZoomNext /></Tool><Tool name="Nowa mapa"><NewMap /></Tool><Tool name="Mapa 3D"><New3D /></Tool><Tool name="Zakładka"><Bookmark /></Tool>
      </ToolRow>
      <ToolRow label="Warstwy">
        <Tool name="Źródła danych"><DataSource /></Tool><Tool name="GeoPackage"><Geopackage /></Tool><Tool name="Shapefile"><NewShape /></Tool>
        <Tool name="SpatiaLite"><Feather /></Tool><Tool name="Tymczasowa"><Scratch /></Tool>
        <Separator /><Tool name="Wirtualna"><Virtual /></Tool><Separator />
        <div className="w-4 shrink-0 pl-2"><Dots /></div>
        <Tool name="Bieżące edycje"><Pencils /></Tool><Tool name="Tryb edycji"><Edit /></Tool><Tool name="Zapisz zmiany"><SaveEdits /></Tool>
        <Tool name="Dodaj obiekt"><AddFeature /></Tool><Tool name="Wierzchołki"><Vertex /></Tool><Drop name="Więcej" />
        <Tool name="Atrybuty"><Attributes /></Tool><Tool name="Usuń"><Delete /></Tool><Tool name="Wytnij"><Cut /></Tool><Tool name="Kopiuj"><Copy /></Tool>
        <Tool name="Wklej"><Paste /></Tool><Tool name="Cofnij"><Undo /></Tool><Tool name="Ponów"><Redo /></Tool>
      </ToolRow>
      <ToolRow label="Zaznaczanie">
        <Tool name="Zaznacz"><Select /></Tool><Drop name="Zaznacz – więcej" />
        <Tool name="Zaznacz wg wartości"><SelectValue /></Tool><Drop name="Wg wartości – więcej" />
        <Tool name="Odznacz"><Deselect /></Tool><Drop name="Odznacz – więcej" />
        <Tool name="Zaznacz wg położenia"><SelectLoc /></Tool>
      </ToolRow>
      <div className="flex min-h-0 flex-1">
        <Browser />
        <div className="flex w-[6px] shrink-0 justify-center pt-[262px]">
          <svg width="2" height="18" viewBox="0 0 2 18" aria-hidden="true"><path d="M1 0v18" stroke="#aaa" strokeDasharray="1 2" /></svg>
        </div>
        <MapCanvas />
      </div>
      <LayersWindow />
      <div className="pointer-events-none absolute top-0 right-0 left-3/4 h-[595px] shadow-[0_2px_12px_rgba(0,0,0,0.45)]" />
      <Calculator />
    </div>
  );
}
